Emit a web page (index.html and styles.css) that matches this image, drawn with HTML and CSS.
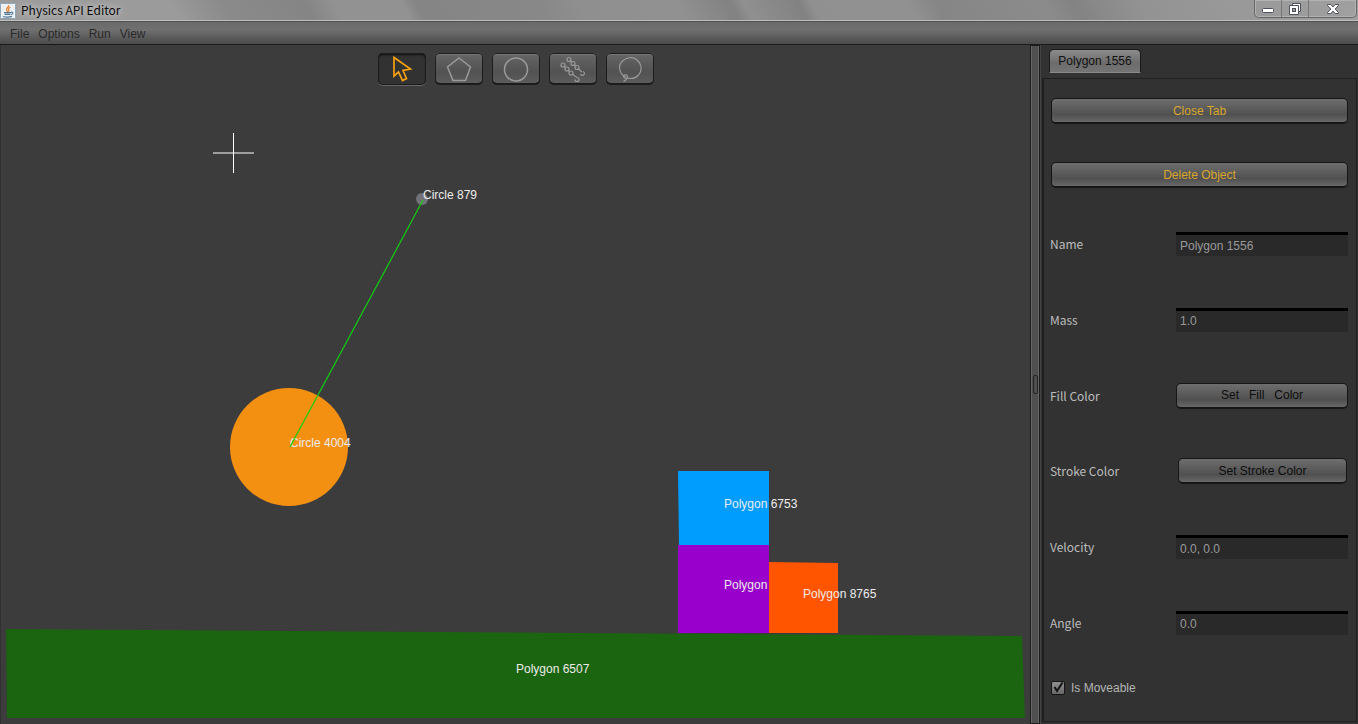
FILE: index.html
```html
<!DOCTYPE html>
<html lang="en">
<head>
<meta charset="utf-8">
<title>Physics API Editor</title>
<link rel="stylesheet" href="styles.css">
</head>
<body>
<div class="app">
  <header class="titlebar">
    <svg class="app-icon" width="16" height="16" viewBox="0 0 16 16" aria-hidden="true">
      <rect x="0.5" y="0.5" width="15" height="15" rx="1" fill="#eef1f4" stroke="#8fa6b8"/>
      <path d="M8.6 2C9.6 4 5.4 5 6.6 7.2L7.8 8.8M10.4 4C8 5.2 8.2 6 9 7.2L8.6 8.8" fill="none" stroke="#e9812a" stroke-width="1.2"/>
      <path d="M4 9.6H11M4.6 11.4H10.4M3 13.4C5 14.4 10 14.4 12 13.2M11 9.2C13.6 8.6 13.4 11 11 11.6" fill="none" stroke="#4f7796" stroke-width="1.1"/>
    </svg>
    <h1 class="title">Physics API Editor</h1>
    <div class="window-controls">
      <button class="win-btn" type="button" aria-label="Minimize">
        <svg width="14" height="12" viewBox="0 0 14 12"><rect x="1.5" y="5.5" width="11" height="4" rx="1" fill="#fff" stroke="#4c4f5c"/></svg>
      </button>
      <button class="win-btn" type="button" aria-label="Restore">
        <svg width="14" height="12" viewBox="0 0 14 12" fill="#fff" stroke="#4c4f5c"><path d="M4.500 .5H12.500V8.500H10.500V11.500H1.500V2.500H4.500Z"/><path d="M4 2.500H10.500V8.500" fill="none"/><rect x="4.500" y="5.500" width="3" height="3" fill="#999"/></svg>
      </button>
      <button class="win-btn win-close" type="button" aria-label="Close">
        <svg width="14" height="12" viewBox="0 0 14 12"><path d="M1.500 1.500H4.800L7 3.900L9.200 1.500H12.500V2.500L9.200 6L12.500 9.500V10.500H9.200L7 8.100L4.800 10.500H1.500V9.500L4.800 6L1.500 2.500Z" fill="#fff" stroke="#4c4f5c"/></svg>
      </button>
    </div>
  </header>

  <nav class="menubar">
    <button class="menu" type="button">File</button>
    <button class="menu" type="button">Options</button>
    <button class="menu" type="button">Run</button>
    <button class="menu" type="button">View</button>
  </nav>

  <main class="workspace">
    <section class="canvas">
      <svg class="scene" role="img" aria-label="Scene">
        <circle cx="422" cy="154" r="6" fill="#737278"/>
        <circle cx="289" cy="402" r="59" fill="#f39012"/>
        <path d="M6 584L1022 591L1025 673H7Z" fill="#1b6410"/>
        <path d="M678 426H769V500H679Z" fill="#009dff"/>
        <path d="M678 500H769V588H678Z" fill="#9900cc"/>
        <path d="M769 517L838 518V588H769Z" fill="#ff5400"/>
        <path d="M213 108H254M233.500 88V128" stroke="#fff" fill="none"/>
        <g class="scene-label">
          <text x="423" y="154">Circle 879</text>
          <text x="290" y="402">Circle 4004</text>
          <text x="724" y="463">Polygon 6753</text>
          <text x="724" y="544">Polygon</text>
          <text x="803" y="553">Polygon 8765</text>
          <text x="516" y="628">Polygon 6507</text>
        </g>
        <path d="M423 155L290 402" stroke="#10d010" stroke-width="1.200"/>
      </svg>
      <div class="toolbar">
        <button class="tool tool-active" type="button" aria-label="Select">
          <svg width="48" height="32" viewBox="0 0 48 32"><path d="M16 4.500V23L20.500 19L24.500 27.500L28.500 25.500L25 17.500L32.500 16Z" fill="none" stroke="#f7a010" stroke-width="1.700"/></svg>
        </button>
        <button class="tool" type="button" aria-label="Polygon">
          <svg width="48" height="32" viewBox="0 0 48 32"><path d="M24 5L35.500 14L30.500 27.500H18L12.500 14Z"/></svg>
        </button>
        <button class="tool" type="button" aria-label="Circle">
          <svg width="48" height="32" viewBox="0 0 48 32"><circle cx="24" cy="16.500" r="11.500"/></svg>
        </button>
        <button class="tool" type="button" aria-label="Spring">
          <svg width="48" height="32" viewBox="0 0 48 32" class="thin"><circle cx="20" cy="6.500" r="2"/><circle cx="24" cy="10.500" r="2"/><circle cx="28" cy="14.500" r="2"/><path d="M21 7.500L23 9.500M25 11.500L27 13.500M29 15.500L33 19M34 18.500A2 2 0 1 1 31.500 21"/><circle cx="14" cy="12" r="2"/><circle cx="18" cy="16" r="2"/><circle cx="22" cy="20" r="2"/><path d="M15 13L17 15M19 17L21 19M23 21L28 24.500A2 2 0 1 1 26 26.500"/></svg>
        </button>
        <button class="tool" type="button" aria-label="Lasso">
          <svg width="48" height="32" viewBox="0 0 48 32" class="thin"><path d="M19.500 24C13.500 21 11.500 13 16 8.500C20 4 27 3.500 31 7C36 11.500 36.500 18 32 22.500C29 25.500 25 26 21 25"/><path d="M17.500 24A2 2 0 1 1 21.500 23.500C21 26 19 25.500 17.500 24M21 24.500C21 26.500 19.500 27.500 17.500 28.500"/></svg>
        </button>
      </div>
    </section>

    <div class="splitter"><span class="grip"></span></div>

    <aside class="inspector">
      <div class="tabs"><button class="tab" type="button">Polygon 1556</button></div>
      <form class="panel">
        <div class="actions">
          <button class="btn btn-accent" type="button">Close Tab</button>
          <button class="btn btn-accent" type="button">Delete Object</button>
        </div>
        <div class="fields">
          <div class="row"><label for="name">Name</label><input class="field" id="name" type="text" value="Polygon 1556"></div>
          <div class="row"><label for="mass">Mass</label><input class="field" id="mass" type="text" value="1.0"></div>
          <div class="row"><label for="fill">Fill Color</label><button class="btn" id="fill" type="button">Set&nbsp;&nbsp; Fill&nbsp;&nbsp; Color</button></div>
          <div class="row"><label for="stroke">Stroke Color</label><button class="btn btn-inset" id="stroke" type="button">Set Stroke Color</button></div>
          <div class="row"><label for="velocity">Velocity</label><input class="field" id="velocity" type="text" value="0.0, 0.0"></div>
          <div class="row"><label for="angle">Angle</label><input class="field" id="angle" type="text" value="0.0"></div>
        </div>
        <label class="check">
          <span class="check-box">
            <input class="check-input" type="checkbox" checked>
            <svg class="check-mark" width="14" height="14" viewBox="0 0 14 14"><path d="M3.500 6L6 10L11.500 1.500" fill="none" stroke="#111" stroke-width="2"/></svg>
          </span>
          Is Moveable
        </label>
      </form>
    </aside>
  </main>
</div>
</body>
</html>
```
FILE: styles.css
```css
* { box-sizing: border-box; }

body {
  margin: 0;
  background: #323232;
  font-family: "Liberation Sans", Arial, sans-serif;
  font-size: 12px;
}

button, input { font: inherit; }
button { padding: 0; border: 0; background: none; color: inherit; }
svg { display: block; }

.app { display: flex; flex-direction: column; min-height: 100vh; }

/* Title bar */
.titlebar {
  display: flex;
  align-items: center;
  gap: 5px;
  height: 21px;
  border-bottom: 1px solid #c0c0c0;
  background: linear-gradient(62deg, #9b9b9b 0%, #9b9b9b 13%, #8a8a8a 17%, #858585 23%, #929292 25%, #929292 30%, #858585 31%, #888 40%, #8f8f8f 43%, #919191 50%, #828282 54%, #909090 55%, #828282 59%, #909090 60%, #919191 67%, #868686 69%, #8b8b8b 77%, #838383 79%, #939393 84%, #a0a0a0 100%);
}
.app-icon { margin-top: 2px; }
.title {
  flex: 1;
  margin: 0;
  color: #0c0c0c;
  font: 12px/20px "Noto Sans CJK SC", "Open Sans", sans-serif;
  text-shadow: 0 0 6px #ccc, 0 0 10px #ccc;
}
.window-controls {
  display: flex;
  align-self: flex-start;
  height: 18px;
  margin-right: 1px;
  border: 1px solid #666;
  border-top: 0;
  border-radius: 0 0 5px 5px;
  box-shadow: inset 0 0 0 1px #b2b2b2;
}
.win-btn { display: grid; place-items: center; width: 27px; border-right: 1px solid #777; }
.win-close { width: 47px; border-right: 0; }

/* Menu bar */
.menubar {
  display: flex;
  gap: 9px;
  height: 24px;
  padding: 2px 10px 0;
  border-top: 1px solid #505050;
  border-bottom: 1px solid #1a1a1a;
  background: linear-gradient(#6a6a6a, #707070 35%, #505050 90%, #4c4c4c);
  color: #292929;
}

/* Workspace */
.workspace { display: flex; flex: 1; }
.canvas {
  position: relative;
  flex: 1;
  overflow: hidden;
  border-left: 1px solid #303030;
  background: #3c3c3c;
}
.scene { position: absolute; inset: 0 0 0 -1px; width: 100%; height: 100%; }
.scene-label { fill: #ececec; }
.toolbar { position: relative; display: flex; justify-content: center; gap: 9px; padding-top: 8px; }
.tool {
  width: 48px;
  height: 32px;
  border-radius: 5px;
  background: linear-gradient(#666, #525252 60%, #5e5e5e);
  box-shadow: inset 0 0 0 1px #1c1c1c, inset 0 2px 0 #777, inset 0 -2px 0 #1c1c1c;
}
.tool svg { fill: none; stroke: #9a9a9a; stroke-width: 1.5; }
.tool .thin { stroke-width: 1.2; }
.tool-active {
  background: #323232;
  box-shadow: inset 0 0 0 1px #1c1c1c, inset 0 2px 2px #111, 0 1px 0 #666;
}

.splitter {
  display: grid;
  place-items: center;
  width: 10px;
  border: 1px solid #1c1c1c;
  background: linear-gradient(90deg, #686868 1px, #4f4f4f 1px, #4f4f4f 7px, #666 7px);
}
.grip { width: 5px; height: 19px; border: 1px solid #242424; border-radius: 2px; }

/* Inspector */
.inspector {
  display: flex;
  flex-direction: column;
  width: 318px;
  padding: 4px 1px 2px 1px;
  border-left: 1px solid #444;
  background: #323232;
}
.tabs { padding: 0 7px 5px; }
.tab {
  width: 92px;
  height: 24px;
  border: 1px solid #1a1a1a;
  border-bottom-color: #8a8a8a;
  border-radius: 5px 5px 0 0;
  background: linear-gradient(#8c8c8c, #6c6c6c 60%, #747474);
  color: #111;
}
.panel {
  display: flex;
  flex: 1;
  flex-direction: column;
  padding: 19px 8px 26px 6px;
  border: 2px solid #1f1f1f;
  border-width: 1px 1px 1px 2px;
}
.actions { display: grid; gap: 38px; padding-left: 1px; }
.btn {
  height: 26px;
  border: 1px solid #161616;
  border-bottom-width: 2px;
  border-radius: 5px;
  background: linear-gradient(#6e6e6e, #505050 68%, #686868);
  color: #0d0d0d;
}
.btn-accent { color: #d9a62c; }
.btn-inset { margin: 0 1px 0 2px; }
.fields {
  display: flex;
  flex: 1;
  flex-direction: column;
  justify-content: space-between;
  margin: 43px 0 45px;
}
.row { display: grid; grid-template-columns: 126px 1fr; align-items: center; height: 26px; }
.row label { color: #bcbcbc; font: 12px/24px "Noto Sans CJK SC", "Open Sans", sans-serif; }
.field {
  width: 100%;
  min-width: 0;
  height: 24px;
  padding: 0 4px;
  border: 0;
  border-top: 3px solid #000;
  background: #292929;
  color: #999;
}
.check { display: flex; align-items: center; gap: 6px; padding-left: 1px; color: #b4b4b4; }
.check-box { display: grid; }
.check-box > * { grid-area: 1 / 1; }
.check-input {
  width: 14px;
  height: 14px;
  margin: 0;
  appearance: none;
  border: 1px solid #151515;
  border-radius: 2px;
  background: linear-gradient(#909090, #686868);
}
.check-mark { pointer-events: none; z-index: 1; }
```
